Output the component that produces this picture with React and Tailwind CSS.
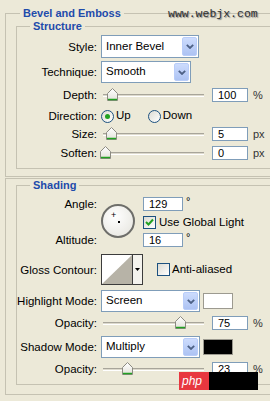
import React from 'react';

function Thumb() {
  return (
    <svg width="11" height="13" viewBox="0 0 11 13">
      <defs>
        <linearGradient id="tg" x1="0" y1="0" x2="0" y2="1">
          <stop offset="0" stopColor="#ffffff" />
          <stop offset="1" stopColor="#e3e2da" />
        </linearGradient>
      </defs>
      <path d="M0.5 5.5 L5.5 0.5 L10.5 5.5 V12.5 H0.5 Z" fill="url(#tg)" stroke="#8c8b82" />
      <path d="M1 11.5 H10" stroke="#21a121" strokeWidth="1.5" />
    </svg>
  );
}

function Slider({ pos }) {
  return (
    <div className="relative w-[104px] h-[16px]">
      <div className="mt-[7px] ml-[3px] h-[3px] border-t border-b border-t-[#a8a59a] border-b-white bg-[#dddacd]" />
      <div className="absolute top-[1px]" style={{ left: pos }}>
        <Thumb />
      </div>
    </div>
  );
}

function NumBox({ value, className = 'w-[36px]' }) {
  return (
    <div className={`h-[14px] border border-[#7f9db9] bg-white pl-[5px] text-[11px] leading-[12px] ${className}`}>
      {value}
    </div>
  );
}

function Combo({ label, className }) {
  return (
    <div className={`flex bg-white border border-[#7f9db9] ${className}`}>
      <div className="flex-1 flex items-center pl-[4px] text-[11.5px]">{label}</div>
      <div className="w-[15px] m-px rounded-[2px] border border-[#b9cdf9] bg-gradient-to-b from-[#cddcfd] to-[#adc3f3] flex items-center justify-center">
        <svg width="8" height="5" viewBox="0 0 8 5">
          <path d="M0.8 0.8 L4 4 L7.2 0.8" fill="none" stroke="#4d6185" strokeWidth="1.8" />
        </svg>
      </div>
    </div>
  );
}

function Radio({ on }) {
  return (
    <div className="w-[13px] h-[13px] rounded-full border border-[#1c5180] bg-gradient-to-br from-[#dcdbd3] to-white flex items-center justify-center">
      {on && <div className="w-[5px] h-[5px] rounded-full bg-[#21a121]" />}
    </div>
  );
}

function Check({ on }) {
  return (
    <div className="w-[13px] h-[13px] border border-[#1c5180] bg-gradient-to-br from-[#dcdbd3] to-white flex items-center justify-center">
      {on && (
        <svg width="9" height="9" viewBox="0 0 9 9">
          <path d="M1 4 L3.5 6.5 L8 1.5" fill="none" stroke="#21a121" strokeWidth="2" />
        </svg>
      )}
    </div>
  );
}

function Label({ children }) {
  return <div className="w-[80px] mr-[4px] text-right text-[11.5px] leading-[14px]">{children}</div>;
}

function Unit({ children }) {
  return <div className="ml-[5px] text-[11px] leading-[12px] text-[#333]">{children}</div>;
}

export default function App() {
  return (
    <div className="relative w-[270px] h-[401px] overflow-hidden bg-[#ece9d8] text-black font-['Liberation_Sans',Arial,sans-serif] pt-[7px] pl-[5px]">
      <fieldset className="w-[300px] border border-[#c5c2b2] pb-[7px]">
        <legend className="ml-[14px] px-[3px] text-[11px] leading-[12px] font-bold text-[#1e4bab]">Bevel and Emboss</legend>

        <fieldset className="mt-[1px] ml-[10px] border border-[#c5c2b2] pt-[3px] pb-[7px]">
          <legend className="ml-[13px] px-[3px] text-[11px] leading-[12px] font-bold text-[#1e4bab]">Structure</legend>

          <div className="flex items-center h-[23px]">
            <Label>Style:</Label>
            <Combo label="Inner Bevel" className="w-[98px] h-[23px]" />
          </div>
          <div className="flex items-center h-[22px] mt-[3px]">
            <Label>Technique:</Label>
            <Combo label="Smooth" className="w-[90px] h-[22px]" />
          </div>
          <div className="flex items-center h-[16px] mt-[4px]">
            <Label>Depth:</Label>
            <div className="-ml-[1px] flex items-center">
              <Slider pos={7} />
              <div className="ml-[8px]"><NumBox value="100" /></div>
              <Unit>%</Unit>
            </div>
          </div>
          <div className="flex items-center h-[16px] mt-[5px]">
            <Label>Direction:</Label>
            <Radio on />
            <span className="ml-[2px] text-[11.5px]">Up</span>
            <div className="ml-[17px]"><Radio /></div>
            <span className="ml-[2px] text-[11.5px]">Down</span>
          </div>
          <div className="flex items-center h-[16px] mt-[2px]">
            <Label>Size:</Label>
            <div className="-ml-[1px] flex items-center">
              <Slider pos={6} />
              <div className="ml-[8px]"><NumBox value="5" /></div>
              <Unit>px</Unit>
            </div>
          </div>
          <div className="flex items-center h-[16px] mt-[3px]">
            <Label>Soften:</Label>
            <div className="-ml-[1px] flex items-center">
              <Slider pos={0} />
              <div className="ml-[8px]"><NumBox value="0" /></div>
              <Unit>px</Unit>
            </div>
          </div>
        </fieldset>
      </fieldset>

      <fieldset className="mt-[1px] w-[300px] border border-[#c5c2b2] pb-[9px]">
        <fieldset className="mt-[0px] ml-[10px] border border-[#c5c2b2] pt-[6px] pb-[7px]">
          <legend className="ml-[13px] px-[3px] text-[11px] leading-[12px] font-bold text-[#1e4bab]">Shading</legend>

          <div className="flex">
            <div className="flex flex-col justify-between">
              <Label>Angle:</Label>
              <Label>Altitude:</Label>
            </div>
            <div className="relative mt-[7px] w-[34px] h-[34px] rounded-full border-2 border-[#6e6e6a] bg-[radial-gradient(circle_at_40%_35%,#ffffff,#e4e3dc)]">
              <div className="absolute left-[8px] top-[5px] text-[9px] leading-[9px]">+</div>
              <div className="absolute left-[15px] top-[15px] w-[2px] h-[2px] bg-black" />
            </div>
            <div className="ml-[8px] flex flex-col">
              <div className="flex">
                <NumBox value="129" className="w-[40px]" />
                <span className="ml-[3px] text-[11px] leading-[9px]">°</span>
              </div>
              <div className="flex items-center mt-[5px]">
                <Check on />
                <span className="ml-[3px] text-[11.5px] leading-[13px]">Use Global Light</span>
              </div>
              <div className="flex mt-[4px]">
                <NumBox value="16" className="w-[40px]" />
                <span className="ml-[3px] text-[11px] leading-[9px]">°</span>
              </div>
            </div>
          </div>

          <div className="flex items-center mt-[7px] h-[31px]">
            <Label>Gloss Contour:</Label>
            <div className="flex border border-[#3c3c3c] h-[31px]">
              <svg width="30" height="29" viewBox="0 0 30 29" className="block">
                <rect width="30" height="29" fill="#ffffff" />
                <polygon points="30,0 30,29 0,29" fill="#b7b3a7" />
              </svg>
              <div className="w-[10px] border-l border-[#3c3c3c] bg-[#f4f3ee] flex items-center justify-center">
                <svg width="5" height="3" viewBox="0 0 5 3"><path d="M0 0 H5 L2.5 3 Z" fill="#000" /></svg>
              </div>
            </div>
            <div className="ml-[14px]"><Check /></div>
            <span className="ml-[2px] text-[11.5px]">Anti-aliased</span>
          </div>

          <div className="flex items-center mt-[5px] h-[22px]">
            <Label>Highlight Mode:</Label>
            <Combo label="Screen" className="w-[99px] h-[22px]" />
            <div className="ml-[3px] w-[30px] h-[16px] border border-[#9c9a90] bg-white" />
          </div>
          <div className="flex items-center h-[16px] mt-[3px]">
            <Label>Opacity:</Label>
            <div className="-ml-[1px] flex items-center">
              <Slider pos={75} />
              <div className="ml-[8px]"><NumBox value="75" /></div>
              <Unit>%</Unit>
            </div>
          </div>
          <div className="flex items-center mt-[5px] h-[22px]">
            <Label>Shadow Mode:</Label>
            <Combo label="Multiply" className="w-[99px] h-[22px]" />
            <div className="ml-[3px] w-[30px] h-[16px] border border-[#9c9a90] bg-black" />
          </div>
          <div className="flex items-center h-[16px] mt-[3px]">
            <Label>Opacity:</Label>
            <div className="-ml-[1px] flex items-center">
              <Slider pos={22} />
              <div className="ml-[8px]"><NumBox value="23" /></div>
              <Unit>%</Unit>
            </div>
          </div>
        </fieldset>
      </fieldset>

      <div className="absolute left-[168px] top-[8px] font-['Liberation_Mono',monospace] text-[11.5px] leading-[12px] text-[#2e2e2e] [text-shadow:1px_1px_1px_#8a8a8a]">
        www.webjx.com
      </div>
      <div className="absolute left-[179px] top-[372px] flex h-[18px]">
        <div className="w-[30px] bg-[#e8373f] text-white italic text-[12px] leading-[18px] pl-[3px]">php</div>
        <div className="w-[49px] bg-black" />
      </div>
    </div>
  );
}
